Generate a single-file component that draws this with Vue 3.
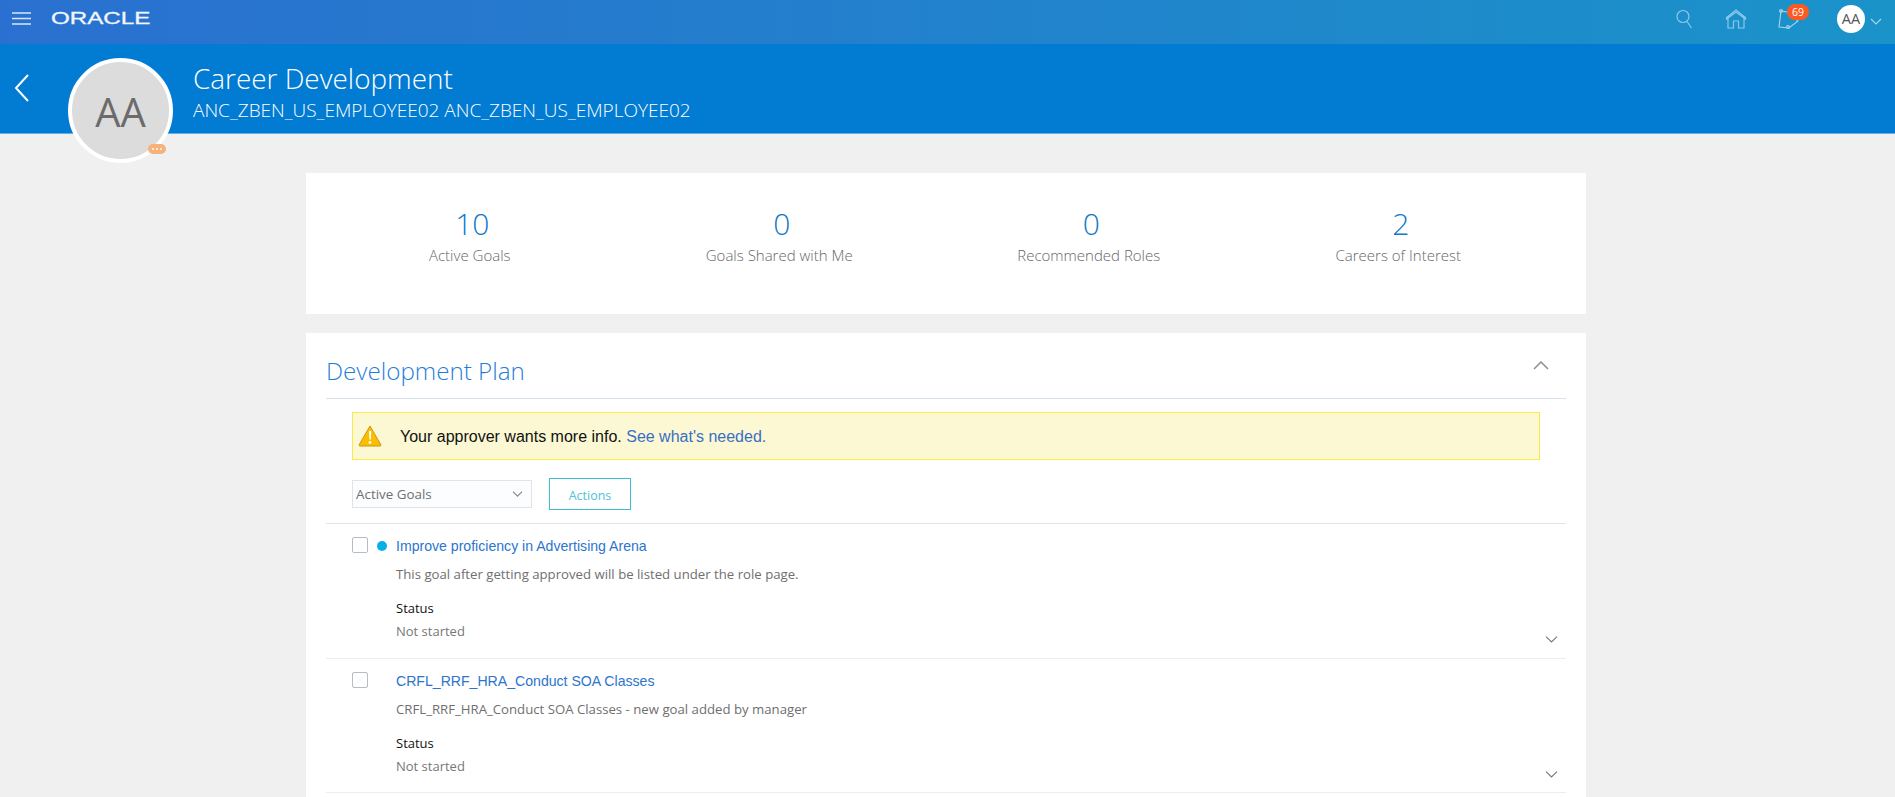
<script setup>
const stats = [
  { value: '10', label: 'Active Goals' },
  { value: '0', label: 'Goals Shared with Me' },
  { value: '0', label: 'Recommended Roles' },
  { value: '2', label: 'Careers of Interest' },
]
const goals = [
  { title: 'Improve proficiency in Advertising Arena', desc: 'This goal after getting approved will be listed under the role page.', dot: true },
  { title: 'CRFL_RRF_HRA_Conduct SOA Classes', desc: 'CRFL_RRF_HRA_Conduct SOA Classes - new goal added by manager', dot: false },
]
</script>

<template>
  <div class="page">
    <header class="topbar">
      <svg class="burger" width="20" height="14" viewBox="0 0 20 14"><path d="M0 1h19M0 6.500h19M0 12h19" stroke="#d7e6f7" stroke-width="1.6" fill="none"/></svg>
      <span class="logo">ORACLE</span>
      <div class="spacer"></div>
      <svg class="ico-search" width="18" height="20" viewBox="0 0 18 20" fill="none" stroke="#8cc8ea" stroke-width="1.2"><circle cx="8" cy="7.500" r="6"/><path d="M12 12.500l4.500 6.500"/></svg>
      <svg class="ico-home" width="22" height="20" viewBox="0 0 22 20" fill="none" stroke="#8cc8ea" stroke-width="1.2"><path d="M1 9L11 1l10 8M3 7.500V19h5.500v-7h5v7H19V7.500M1 10.500l10-7.500 10 7.500"/></svg>
      <div class="notif">
        <svg width="24" height="20" viewBox="0 0 24 20" fill="none" stroke="#a5d4ee" stroke-width="1.1"><path d="M3 2L1 18l10 1 9-7L9 3z"/><circle cx="3" cy="2" r="1.400"/><circle cx="10" cy="18" r="1.400"/></svg>
        <span class="badge">69</span>
      </div>
      <div class="me">AA</div>
      <svg class="me-chev" width="12" height="7" viewBox="0 0 12 7" fill="none" stroke="#a5d4ee" stroke-width="1.2"><path d="M1 1l5 5 5-5"/></svg>
    </header>

    <section class="hero">
      <svg class="back" width="16" height="30" viewBox="0 0 16 30" fill="none" stroke="#fff" stroke-width="2"><path d="M14 2L2 15l12 13"/></svg>
      <div class="titles">
        <h1>Career Development</h1>
        <p>ANC_ZBEN_US_EMPLOYEE02 ANC_ZBEN_US_EMPLOYEE02</p>
      </div>
      <div class="avatar">
        AA
        <span class="more"><i></i><i></i><i></i></span>
      </div>
    </section>

    <main class="content">
      <section class="card stats">
        <div v-for="s in stats" :key="s.label" class="stat">
          <div class="num">{{ s.value }}</div>
          <div class="lbl">{{ s.label }}</div>
        </div>
      </section>

      <section class="card plan">
        <div class="plan-head">
          <h2>Development Plan</h2>
          <svg width="16" height="9" viewBox="0 0 16 9" fill="none" stroke="#8a8f94" stroke-width="1.5"><path d="M1 8l7-7 7 7"/></svg>
        </div>
        <div class="alert">
          <svg width="24" height="22" viewBox="0 0 24 22"><path d="M12 1L1 20a1 1 0 0 0 1 1h20a1 1 0 0 0 1-1z" fill="#fbbd00" stroke="#c99a10" stroke-width="1"/><path d="M11 6h2.200l-.4 8.500h-1.400z" fill="#fff"/><circle cx="12" cy="17.500" r="1.400" fill="#fff"/></svg>
          <span class="alert-text">Your approver wants more info. <a>See what's needed.</a></span>
        </div>
        <div class="tools">
          <div class="select">
            <span>Active Goals</span>
            <svg width="11" height="6" viewBox="0 0 11 6" fill="none" stroke="#888" stroke-width="1.100"><path d="M1 .7l4.500 4.500L10 .7"/></svg>
          </div>
          <button class="actions">Actions</button>
        </div>
        <article v-for="g in goals" :key="g.title" class="goal">
          <span class="check"></span>
          <span class="dot-slot"><span v-if="g.dot" class="dot"></span></span>
          <div class="goal-body">
            <a class="goal-title">{{ g.title }}</a>
            <p class="goal-desc">{{ g.desc }}</p>
            <div class="status-l">Status</div>
            <div class="status-v">Not started</div>
          </div>
          <svg class="goal-chev" width="13" height="7" viewBox="0 0 13 7" fill="none" stroke="#777" stroke-width="1.100"><path d="M1 .7l5.500 5.300L12 .7"/></svg>
        </article>
      </section>
    </main>
  </div>
</template>

<style>
html, body { margin: 0; height: 797px; overflow: hidden; background: #f0f0f0; }
</style>

<style scoped>
.page { font-family: "Open Sans", "Noto Sans", sans-serif; color: #666; height: 797px; overflow: hidden; background: #f0f0f0; }
.topbar { height: 44px; box-sizing: border-box; padding-bottom: 6px; display: flex; align-items: center; background: linear-gradient(90deg, #2a70d0 0%, #1a93c9 100%); }
.burger { margin-left: 12px; }
.logo { margin-left: 19px; width: 102px; font: 400 16px/1 "Liberation Sans", sans-serif; color: #f1f6fc; display: inline-block; transform: scaleX(1.51); transform-origin: left center; -webkit-text-stroke: .3px #f1f6fc; }
.spacer { flex: 1; }
.ico-search { margin-right: 32px; }
.ico-home { margin-right: 31px; }
.notif { position: relative; width: 24px; height: 20px; margin-right: 35px; }
.badge { position: absolute; left: 9px; top: -5px; width: 22px; height: 16px; border-radius: 8px; background: #fc5a22; color: #fff; font: 10.500px/16px "Open Sans", sans-serif; text-align: center; }
.me { width: 28px; height: 28px; border-radius: 50%; background: #fff; color: #555; font-size: 14.500px; line-height: 28px; text-align: center; }
.me-chev { margin: 4px 13px 0 5px; }

.hero { position: relative; height: 90px; box-sizing: border-box; display: flex; background: #027bd3; border-bottom: 1px solid #5fb0e8; }
.back { margin: 29px 0 0 14px; }
.titles { margin-left: 163px; color: #fff; }
.titles h1 { margin: 15px 0 0; font-size: 27.900px; line-height: 38px; font-weight: 300; }
.titles p { margin: 1px 0 0; font-size: 19px; line-height: 24px; font-weight: 300; }
.avatar { position: absolute; left: 68px; top: 14px; width: 97px; height: 97px; border: 4px solid #fff; border-radius: 50%; background: #dcdcdc; color: #6b6b6b; font-size: 40px; line-height: 100px; text-align: center; font-weight: 400; }
.more { position: absolute; left: 76px; top: 82px; width: 18px; height: 10px; border-radius: 5px; background: #f7b27c; display: flex; align-items: center; justify-content: center; gap: 2px; }
.more i { width: 2px; height: 2px; background: #fff; border-radius: 50%; }

.content { width: 1280px; margin: 39px 0 0 306px; display: flex; flex-direction: column; gap: 19px; }
.card { background: #fff; }
.stats { height: 141px; box-sizing: border-box; padding: 33px 33px 0 9px; display: grid; grid-template-columns: repeat(4, 1fr); align-content: start; }
.stat { text-align: center; }
.num { font-size: 30px; line-height: 36px; font-weight: 300; color: #0f78c8; padding-left: 5px; }
.lbl { font-size: 15px; line-height: 20px; margin-top: 3px; color: #666; font-weight: 300; }

.plan { padding: 0 20px; height: 470px; }
.plan-head { height: 66px; box-sizing: border-box; margin: 0; display: flex; align-items: center; justify-content: space-between; border-bottom: 1px solid #d6e0ea; padding-right: 17px; }
.plan-head h2 { margin: 10px 0 0; font-size: 24.200px; font-weight: 300; color: #1f7ed8; }
.plan-head svg { margin-top: 0; }
.alert { margin: 13px 26px 0 26px; height: 48px; box-sizing: border-box; background: #fbf8d3; border: 1px solid #f8ea48; display: flex; align-items: center; padding-left: 5px; }
.alert-text { margin-left: 18px; padding-top: 2px; font: 16px "Liberation Sans", sans-serif; color: #111; }
.alert-text a { color: #3a6fc4; }
.tools { display: flex; align-items: flex-start; gap: 17px; padding: 18px 0 13px 26px; border-bottom: 1px solid #dfe5ec; }
.select { width: 180px; height: 28px; margin-top: 2px; box-sizing: border-box; border: 1px solid #e0e3e8; background: #fcfdfe; display: flex; align-items: center; justify-content: space-between; padding: 0 8px 0 3px; font-size: 13.400px; color: #707070; }
.actions { width: 82px; height: 32px; box-sizing: border-box; border: 1px solid #3fbdd0; background: #fff; color: #4cc3d6; font: 12.500px/1 "Open Sans", sans-serif; padding: 5px 0 0; }
.goal { position: relative; display: flex; height: 134.500px; box-sizing: border-box; padding: 13px 0 0 26px; border-bottom: 1px solid #eeeeee; }
.check { width: 16px; height: 16px; box-sizing: border-box; border: 1px solid #b5bcc4; border-radius: 2px; background: #fff; }
.dot-slot { width: 28px; display: flex; justify-content: center; padding-top: 4px; box-sizing: border-box; height: 16px; }
.dot { width: 10px; height: 10px; border-radius: 50%; background: #06b0e6; margin-left: -1px; }
.goal-body { flex: 1; }
.goal-title { display: block; font: 14.100px/18px "Liberation Sans", sans-serif; color: #2d74cc; }
.goal-desc { margin: 10px 0 0; font-size: 13.200px; line-height: 18px; color: #6f6f6f; }
.status-l { margin-top: 16px; font-size: 13px; line-height: 18px; color: #111; }
.status-v { margin-top: 5px; font-size: 13px; line-height: 18px; color: #777; }
.goal-chev { position: absolute; right: 8px; top: 112px; }
</style>
